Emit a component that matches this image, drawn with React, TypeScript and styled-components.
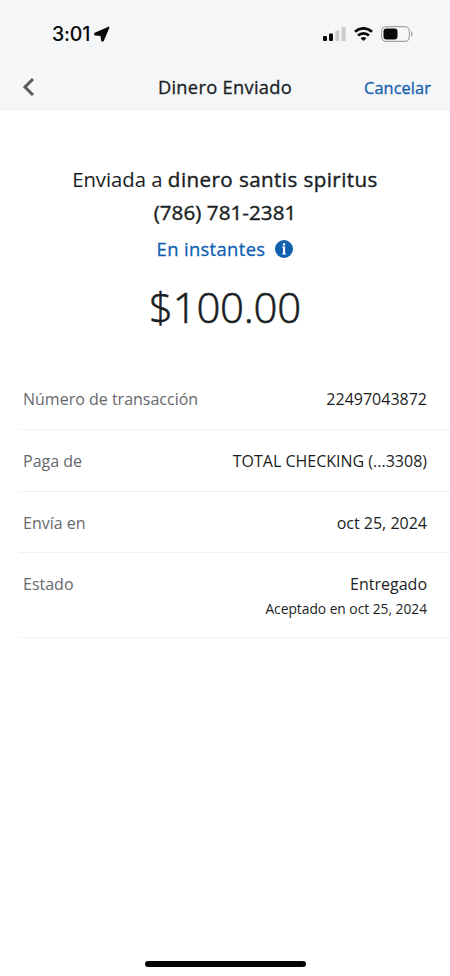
import React from "react";
import styled, { createGlobalStyle } from "styled-components";

const Global = createGlobalStyle`
  * { box-sizing: border-box; }
  html, body { margin: 0; background: #fff; }
  body { font-family: "Open Sans", "Noto Sans", sans-serif; color: #1a1e23; }
`;
const Screen = styled.main`
  width: 450px; height: 976px; display: flex; flex-direction: column; background: #fff; overflow: hidden;
`;
const Header = styled.header`
  height: 111px; background: #f5f6f8; flex: none;
`;
const StatusBar = styled.div`
  height: 63px; padding: 4px 37px 0 52px; display: flex; align-items: center; justify-content: space-between;
`;
const Clock = styled.div`
  display: flex; align-items: center; gap: 4px; font: 500 19.5px/24px Inter, sans-serif; letter-spacing: -0.2px; color: #080808;
`;
const Indicators = styled.div`
  display: flex; align-items: center; gap: 8px;
`;
const NavBar = styled.nav`
  height: 48px; padding: 0 19px 0 22px; display: grid; grid-template-columns: 1fr auto 1fr; align-items: center;
`;
const IconButton = styled.button`
  border: 0; padding: 0; background: none; display: flex; width: 13px;
`;
const Title = styled.h1`
  margin: 0 3px 0 0; font-size: 18.3px; line-height: 24px; font-weight: 400; letter-spacing: 0.3px; -webkit-text-stroke: 0.3px currentColor;
`;
const TextButton = styled.button`
  border: 0; padding: 2px 0 0; background: none; justify-self: end; font: 400 16.3px/24px "Open Sans", sans-serif; letter-spacing: 0.12px; -webkit-text-stroke: 0.3px currentColor; color: #0f60b0;
`;
const Summary = styled.section`
  padding-top: 52px; height: 258px; display: flex; flex-direction: column; align-items: center; text-align: center;
`;
const Recipient = styled.div`
  font-size: 20.3px; line-height: 33px;
`;
const Strong = styled.span<{ $tracking: number }>`
  font-size: 20.6px; letter-spacing: ${(p) => p.$tracking}px; -webkit-text-stroke: 0.4px currentColor;
`;
const Timing = styled.div`
  display: flex; align-items: center; gap: 10px; margin-top: 7px; font-size: 18.4px; line-height: 26px; letter-spacing: 0.35px; -webkit-text-stroke: 0.3px currentColor; color: #0f60b0;
`;
const Amount = styled.div`
  margin-top: 17px; font-size: 42px; line-height: 56px; font-weight: 300; letter-spacing: -0.25px; -webkit-text-stroke: 0.6px currentColor;
`;
const Details = styled.dl`
  margin: 0 0 0 19px;
`;
const Row = styled.div<{ $height: number; $top?: number }>`
  height: ${(p) => p.$height}px; padding: ${(p) => p.$top ?? 19}px 23px 0 4px; display: flex; justify-content: space-between; border-bottom: 1px solid #f1f1f2;
`;
const Label = styled.dt`
  font-size: 16px; line-height: 25px; color: #66696d;
`;
const Value = styled.dd`
  margin: 0; font-size: 16px; line-height: 25px; text-align: right;
`;
const Note = styled.div`
  font-size: 13.75px; line-height: 23px;
`;
const HomeIndicator = styled.div`
  width: 161px; height: 6px; margin: auto auto 9px; border-radius: 3px; background: #050505;
`;

export default function App() {
  return (
    <Screen>
      <Global />
      <Header>
        <StatusBar>
          <Clock>
            <span>3:01</span>
            <svg width="16" height="16" viewBox="0 0 16 16"><path d="M14.8 1.3 1 7.5v1.2l6 .5.9 5.5h1.2z" fill="#080808" stroke="#080808" strokeWidth="1.4" strokeLinejoin="round" /></svg>
          </Clock>
          <Indicators>
            <svg width="23" height="14" viewBox="0 0 23 14" fill="#080808"><rect y="9" width="4" height="5" rx="1" /><rect x="6" y="6.5" width="4" height="7.5" rx="1" /><rect x="12.3" y="3.5" width="4" height="10.5" rx="1" fill="#cbcccd" /><rect x="18.6" width="4" height="14" rx="1" fill="#cbcccd" /></svg>
            <svg width="19" height="14" viewBox="0 0 19 14" fill="none" stroke="#080808" strokeWidth="2.8"><path d="M1 4.8a12.2 12.2 0 0 1 17 0M4 8.6a8 8 0 0 1 11 0" /><path d="m6.6 11.2 2.9 2.8 2.9-2.8a4.3 4.3 0 0 0-5.8 0z" fill="#080808" stroke="none" /></svg>
            <svg width="32" height="16" viewBox="0 0 32 16"><rect x=".6" y=".6" width="27.8" height="14.8" rx="4.6" fill="none" stroke="#a2a4a6" strokeWidth="1.2" /><rect x="2.5" y="2.5" width="14" height="11" rx="3" fill="#080808" /><path d="M30 5.3c2 .8 2 4.6 0 5.4z" fill="#a2a4a6" /></svg>
          </Indicators>
        </StatusBar>
        <NavBar>
          <IconButton aria-label="Atrás"><svg width="13" height="20" viewBox="0 0 13 20"><path d="m11 2-8 8 8 8" fill="none" stroke="#5b5c5e" strokeWidth="3" /></svg></IconButton>
          <Title>Dinero Enviado</Title>
          <TextButton>Cancelar</TextButton>
        </NavBar>
      </Header>
      <Summary>
        <Recipient>Enviada a <Strong $tracking={0.42}>dinero santis spiritus</Strong></Recipient>
        <Recipient><Strong $tracking={0.06}>(786) 781-2381</Strong></Recipient>
        <Timing>En instantes
          <svg width="18" height="18" viewBox="0 0 18 18"><circle cx="9" cy="9" r="9" fill="#0f60b0" /><path d="M6.9 6.6h3.2v6.8h1.1v1H6.9v-1H8V7.6H6.9zM7.9 3.2h2.2v2.2H7.9z" fill="#fff" /></svg>
        </Timing>
        <Amount>$100.00</Amount>
      </Summary>
      <Details>
        <Row $height={61} $top={18}><Label>Número de transacción</Label><Value>22497043872</Value></Row>
        <Row $height={62}><Label>Paga de</Label><Value>TOTAL CHECKING (...3308)</Value></Row>
        <Row $height={61}><Label>Envía en</Label><Value>oct 25, 2024</Value></Row>
        <Row $height={85}><Label>Estado</Label><Value>Entregado<Note>Aceptado en oct 25, 2024</Note></Value></Row>
      </Details>
      <HomeIndicator />
    </Screen>
  );
}
